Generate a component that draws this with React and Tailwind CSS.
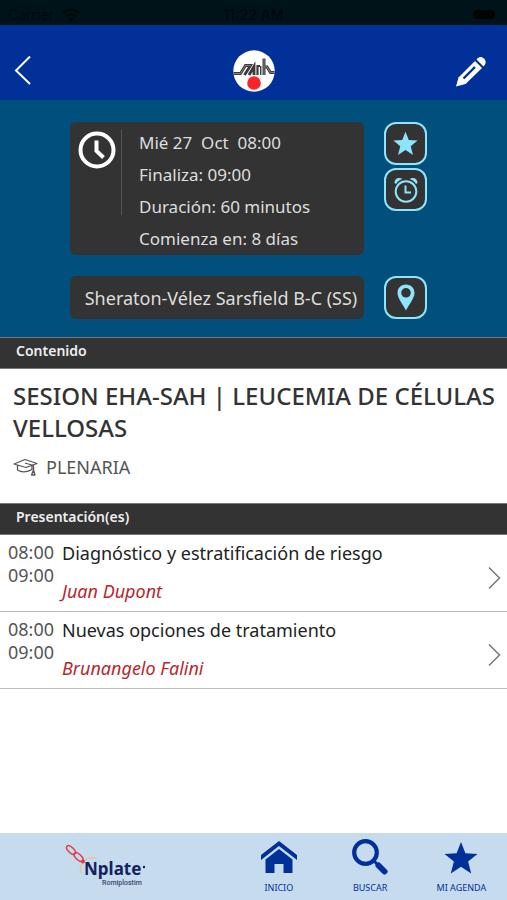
import React from "react";

const talks = [
  { id: 1, start: "08:00", end: "09:00", title: "Diagnóstico y estratificación de riesgo", speaker: "Juan Dupont" },
  { id: 2, start: "08:00", end: "09:00", title: "Nuevas opciones de tratamiento", speaker: "Brunangelo Falini" },
];

const STAR = "M18 1l4.400 11.300 12.100.700-9.400 7.600 3.100 11.900L18 25.800 7.800 32.500l3.100-11.900L1.500 13l12.100-.700z";

function StatusBar() {
  return (
    <div className="grid h-[25px] grid-cols-3 items-center bg-[#001318] px-2 pt-1 font-[Inter,sans-serif] text-[14px] text-[#00080b]">
      <div className="flex items-center gap-2">
        <span>Carrier</span>
        <svg viewBox="0 0 18 14" className="h-[14px] w-[18px]" fill="none" stroke="currentColor" strokeWidth="2.400">
          <path d="M1 5c5-4.500 11-4.500 16 0M4 8.500c3-2.800 7-2.800 10 0" />
          <path d="M9 13.500L6 10.600c1.800-1.500 4.200-1.500 6 0z" fill="currentColor" stroke="none" />
        </svg>
      </div>
      <span className="text-center font-semibold">11:22 AM</span>
      <span className="mr-1 h-[9px] w-[22px] justify-self-end rounded-sm bg-[#000405]" />
    </div>
  );
}

function SahLogo() {
  return (
    <svg viewBox="0 0 42 42" className="size-[42px]" role="img" aria-label="SAH">
      <circle cx="21" cy="21" r="20.700" fill="#fff" />
      <g fill="none" stroke="#3a3a3a" strokeWidth="2.800">
        <path d="M0.500 23.500H7.500L12.500 15.500H17.500L11.500 25" />
        <path d="M16 25L21 16.500V25" />
        <path d="M24.500 25V16H27" strokeWidth="2.200" />
        <path d="M27.700 25V16" strokeWidth="1.400" />
        <path d="M31 25V8.500" strokeWidth="3" />
        <path d="M31.500 17H34L37.500 22.500H41.500" />
      </g>
      <path
        d="M0.500 23.500H7.500L12.500 15.500H17.500M31 25V8.500M31.500 17H34L37.500 22.500H41.500"
        fill="none"
        stroke="#ccc"
        strokeWidth="0.500"
      />
      <circle cx="21" cy="33" r="6.800" fill="#fb2529" />
    </svg>
  );
}

function Header() {
  return (
    <header className="grid h-[75px] grid-cols-3 items-center bg-[#003098] px-3 pt-4">
      <button type="button" aria-label="Volver" className="justify-self-start text-white">
        <svg viewBox="0 0 22 30" className="h-[30px] w-[22px]" fill="none" stroke="currentColor" strokeWidth="2">
          <path d="M18 .500L4 14.500L18 28" />
        </svg>
      </button>
      <div className="justify-self-center">
        <SahLogo />
      </div>
      <button type="button" aria-label="Editar" className="mr-2 justify-self-end text-white">
        <svg viewBox="0 0 32 32" className="size-[32px]" fill="currentColor">
          <path d="M1 31.500L3.500 22.500L20 6L27 13L10.500 29z" />
          <path d="M8.500 23.500L20 12" stroke="#003098" strokeWidth="2.400" />
          <path d="M21.500 4.500C23.500 1.500 26.500 1 29 3.500C31.500 6 31 9 28.500 11.500z" />
        </svg>
      </button>
    </header>
  );
}

function SquareButton({ label, children }) {
  return (
    <button
      type="button"
      aria-label={label}
      className="flex size-[43px] items-center justify-center rounded-xl border-2 border-[#8de4fb] bg-[#333] text-[#8de4fb]"
    >
      {children}
    </button>
  );
}

function SessionInfo() {
  return (
    <section className="grid grid-cols-[1fr_43px] gap-x-5 gap-y-[21px] bg-[#004f7c] pt-[22px] pr-20 pb-[18px] pl-[70px] text-[18px] leading-8 text-[#dedede]">
      <div className="flex rounded-md bg-[#333]">
        <svg viewBox="0 0 38 38" className="mt-[9px] ml-2 size-[38px] shrink-0" fill="none" stroke="#fff">
          <circle cx="19" cy="19" r="16.500" strokeWidth="4" />
          <path d="M18.500 9.500V20L25.500 26.500" strokeWidth="4" />
        </svg>
        <div className="mt-2 ml-[5px] h-[85px] w-px shrink-0 bg-[#555]" />
        <div className="pt-[5px] pl-[17px] text-[17px] whitespace-pre">
          <p>Mié 27  Oct  08:00</p>
          <p>Finaliza: 09:00</p>
          <p>Duración: 60 minutos</p>
          <p>Comienza en: 8 días</p>
        </div>
      </div>
      <div className="flex flex-col gap-[3px]">
        <SquareButton label="Favorito">
          <svg viewBox="0 0 36 34" className="h-[25px] w-[27px]" fill="currentColor">
            <path d={STAR} />
          </svg>
        </SquareButton>
        <SquareButton label="Alarma">
          <svg viewBox="0 0 26 28" className="h-[28px] w-[26px]" fill="none" stroke="currentColor" strokeWidth="2">
            <circle cx="13" cy="15.500" r="10.300" />
            <path d="M12.500 9.500V16.500H18" />
            <path d="M1.500 7C1.500 2.500 6 .500 9.500 3C7 3.800 4.500 5.500 3 8zM24.500 7C24.500 2.500 20 .500 16.500 3C19 3.800 21.500 5.500 23 8z" fill="currentColor" stroke="none" />
          </svg>
        </SquareButton>
      </div>
      <div className="flex items-center justify-center rounded-md bg-[#333] pl-2 whitespace-nowrap">
        Sheraton-Vélez Sarsfield B-C (SS)
      </div>
      <SquareButton label="Ubicación">
        <svg viewBox="0 0 18 27" className="h-[27px] w-[18px]" fill="currentColor">
          <path
            fillRule="evenodd"
            d="M9 .500C4 .500.500 4 .500 9C.500 14 6 20.500 9 26.500C12 20.500 17.500 14 17.500 9C17.500 4 14 .500 9 .500zM9 4A4.800 4.800 0 1 1 9 13.600A4.800 4.800 0 1 1 9 4z"
          />
        </svg>
      </SquareButton>
    </section>
  );
}

function SectionBar({ children }) {
  return (
    <h2 className="border-y border-[#777] bg-[#333] px-4 pt-[2px] pb-[6px] text-[14px] leading-[22px] font-semibold text-[#eee]">
      {children}
    </h2>
  );
}

function TalkRow({ talk }) {
  return (
    <a href="#" className="flex h-[77px] border-b border-[#bbb] pt-[6px] pr-[6px] pl-2 text-[18px]">
      <div className="w-[54px] shrink-0 leading-[23px] text-[#555]">
        <p>{talk.start}</p>
        <p>{talk.end}</p>
      </div>
      <div className="flex-1">
        <p className="leading-6 text-[#222]">{talk.title}</p>
        <p className="mt-[14px] leading-6 text-[#b4292d] italic">{talk.speaker}</p>
      </div>
      <svg viewBox="0 0 13 22" className="mt-[26px] h-[22px] w-[13px]" fill="none" stroke="#777" strokeWidth="1.500">
        <path d="M1 .500L11.500 11L1 21.500" />
      </svg>
    </a>
  );
}

function NplateLogo() {
  return (
    <svg viewBox="0 0 84 44" className="h-[44px] w-[84px]" role="img" aria-label="Nplate Romiplostim">
      <path d="M16 29C13 21 20 12 32 14" fill="none" stroke="#e8c58c" strokeWidth="1.200" />
      <g fill="none" stroke="#dd3b4b" strokeWidth="1.500">
        <ellipse cx="6" cy="6" rx="5.500" ry="2.700" transform="rotate(43 6 6)" />
        <ellipse cx="13.500" cy="13" rx="5.500" ry="2.700" transform="rotate(43 13.500 13)" />
      </g>
      <circle cx="18" cy="17.500" r="2" fill="#dd3b4b" />
      <text x="19" y="31" fontSize="17" fontWeight="700" fill="#14235e" fontFamily="Noto Sans, sans-serif">Nplate</text>
      <circle cx="79" cy="23" r="1.200" fill="#14235e" />
      <text x="37" y="41" fontSize="7" fontWeight="500" fill="#39466f" fontFamily="Roboto, sans-serif">Romiplostim</text>
    </svg>
  );
}

function NavItem({ label, children }) {
  return (
    <a href="#" className="flex flex-col items-center gap-[7px] pt-[6px] text-[#003098]">
      {children}
      <span className="text-[9px] leading-3">{label}</span>
    </a>
  );
}

function BottomNav() {
  return (
    <nav className="mt-auto grid h-[67px] grid-cols-[46%_18%_18%_18%] bg-[#c6dbee]">
      <div className="flex items-start justify-center pt-[11px] pr-5">
        <NplateLogo />
      </div>
      <NavItem label="INICIO">
        <svg viewBox="0 0 36 36" className="size-[36px]" fill="currentColor">
          <path d="M18 2L36 16V21L18 7L0 21V16z" />
          <path d="M18 10L31.500 20.500V34H22.500V25H13.500V34H4.500V20.500z" />
        </svg>
      </NavItem>
      <NavItem label="BUSCAR">
        <svg viewBox="0 0 36 36" className="size-[36px]" fill="none" stroke="currentColor">
          <circle cx="13.500" cy="13.500" r="11.300" strokeWidth="4.200" />
          <path d="M22 22L26 26" strokeWidth="3" />
          <path d="M26.500 26.500L32.500 32.500" strokeWidth="6" strokeLinecap="round" />
        </svg>
      </NavItem>
      <NavItem label="MI AGENDA">
        <svg viewBox="0 0 36 36" className="size-[36px]" fill="currentColor">
          <path d={STAR} transform="translate(0 2)" />
        </svg>
      </NavItem>
    </nav>
  );
}

export default function App() {
  return (
    <div className="flex min-h-screen flex-col bg-white font-['Noto_Sans',sans-serif]">
      <StatusBar />
      <Header />
      <main>
        <SessionInfo />
        <SectionBar>Contenido</SectionBar>
        <section className="pt-[11px] pr-1 pb-6 pl-[13px] text-[#333]">
          <h1 className="text-[24px] leading-8 font-medium">SESION EHA-SAH | LEUCEMIA DE CÉLULAS VELLOSAS</h1>
          <div className="mt-[11px] flex items-center gap-2 text-[18px] leading-6 text-[#555]">
            <svg viewBox="0 0 25 18" className="h-[18px] w-[25px]" fill="none" stroke="currentColor" strokeWidth="1.300" strokeLinejoin="round">
              <path d="M1 6L12 1.500L24 5.500L13 9.500zM4.500 7.500V12C8 14.500 14 14.500 19 11.500V8" />
              <path d="M12 5L20.500 7.500V12.500M20.500 12L18.500 17H22z" />
            </svg>
            <span>PLENARIA</span>
          </div>
        </section>
        <SectionBar>Presentación(es)</SectionBar>
        {talks.map((talk) => (
          <TalkRow key={talk.id} talk={talk} />
        ))}
      </main>
      <BottomNav />
    </div>
  );
}
